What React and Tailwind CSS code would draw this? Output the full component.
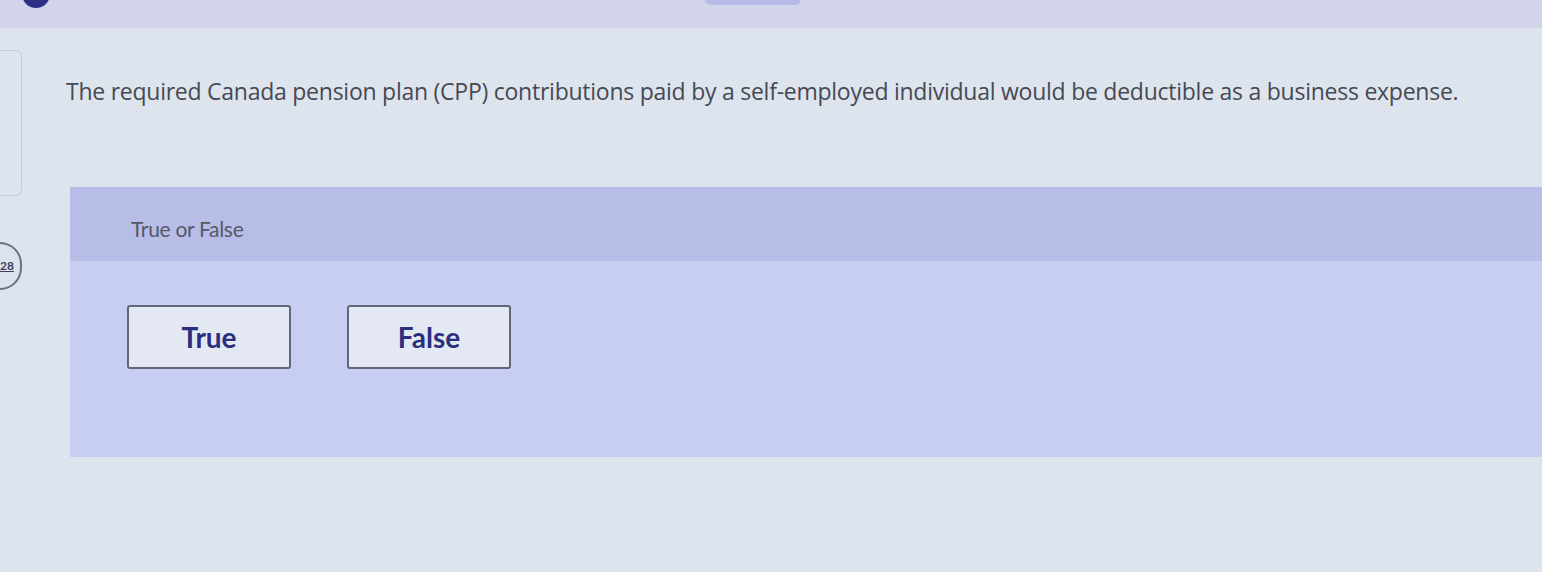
import React from "react";

const Question = () => {
  return (
    <div className="min-h-[572px] w-[1542px] bg-[#dee4ed] overflow-hidden font-['Lato',sans-serif]">
      {/* top toolbar strip */}
      <div className="h-[28px] bg-[#d2d5ea] flex items-start">
        <div className="ml-[22px] -mt-[20px] size-[28px] rounded-full bg-[#2c2f86]" />
        <div className="ml-[655px] -mt-[10px] h-[15px] w-[96px] rounded-md bg-[#b7b9e6]" />
      </div>

      <div className="flex">
        {/* left rail: previous card + question number */}
        <div className="w-[24px] shrink-0 flex flex-col">
          <div className="mt-[22px] h-[146px] w-[22px] rounded-r-md border border-l-0 border-[#c7ccd6]" />
          <div className="mt-[46px] h-[48px] w-[22px] rounded-r-full border-2 border-l-0 border-[#6d7180] bg-[#dde3ec] flex items-center">
            <span className="text-[12px] font-bold text-[#3a3d55] underline leading-none">28</span>
          </div>
        </div>

        <div className="flex-1 ml-[42px]">
          <p className="mt-[52px] text-[23px] text-[#454953] tracking-[-0.25px] font-['Open_Sans',sans-serif] leading-none">
            The required Canada pension plan (CPP) contributions paid by a self-employed individual would be deductible as a business expense.
          </p>

          {/* answer panel */}
          <div className="mt-[84px] ml-[4px] h-[270px] flex flex-col">
            <div className="h-[74px] bg-[#b8bde8] flex items-center pl-[61px] pt-[10px]">
              <span className="text-[21px] text-[#555866] tracking-[-0.3px]">True or False</span>
            </div>
            <div className="flex-1 bg-[#c7cef1] flex gap-[56px] pl-[57px] pt-[44px]">
              <button className="h-[64px] w-[164px] rounded-[3px] border-2 border-[#62667a] bg-[#e3e8f3] text-[28px] font-bold text-[#2b2f7d]">
                True
              </button>
              <button className="h-[64px] w-[164px] rounded-[3px] border-2 border-[#62667a] bg-[#e3e8f3] text-[28px] font-bold text-[#2b2f7d]">
                False
              </button>
            </div>
          </div>
        </div>
      </div>
    </div>
  );
};

export default function App() {
  return <Question />;
}
